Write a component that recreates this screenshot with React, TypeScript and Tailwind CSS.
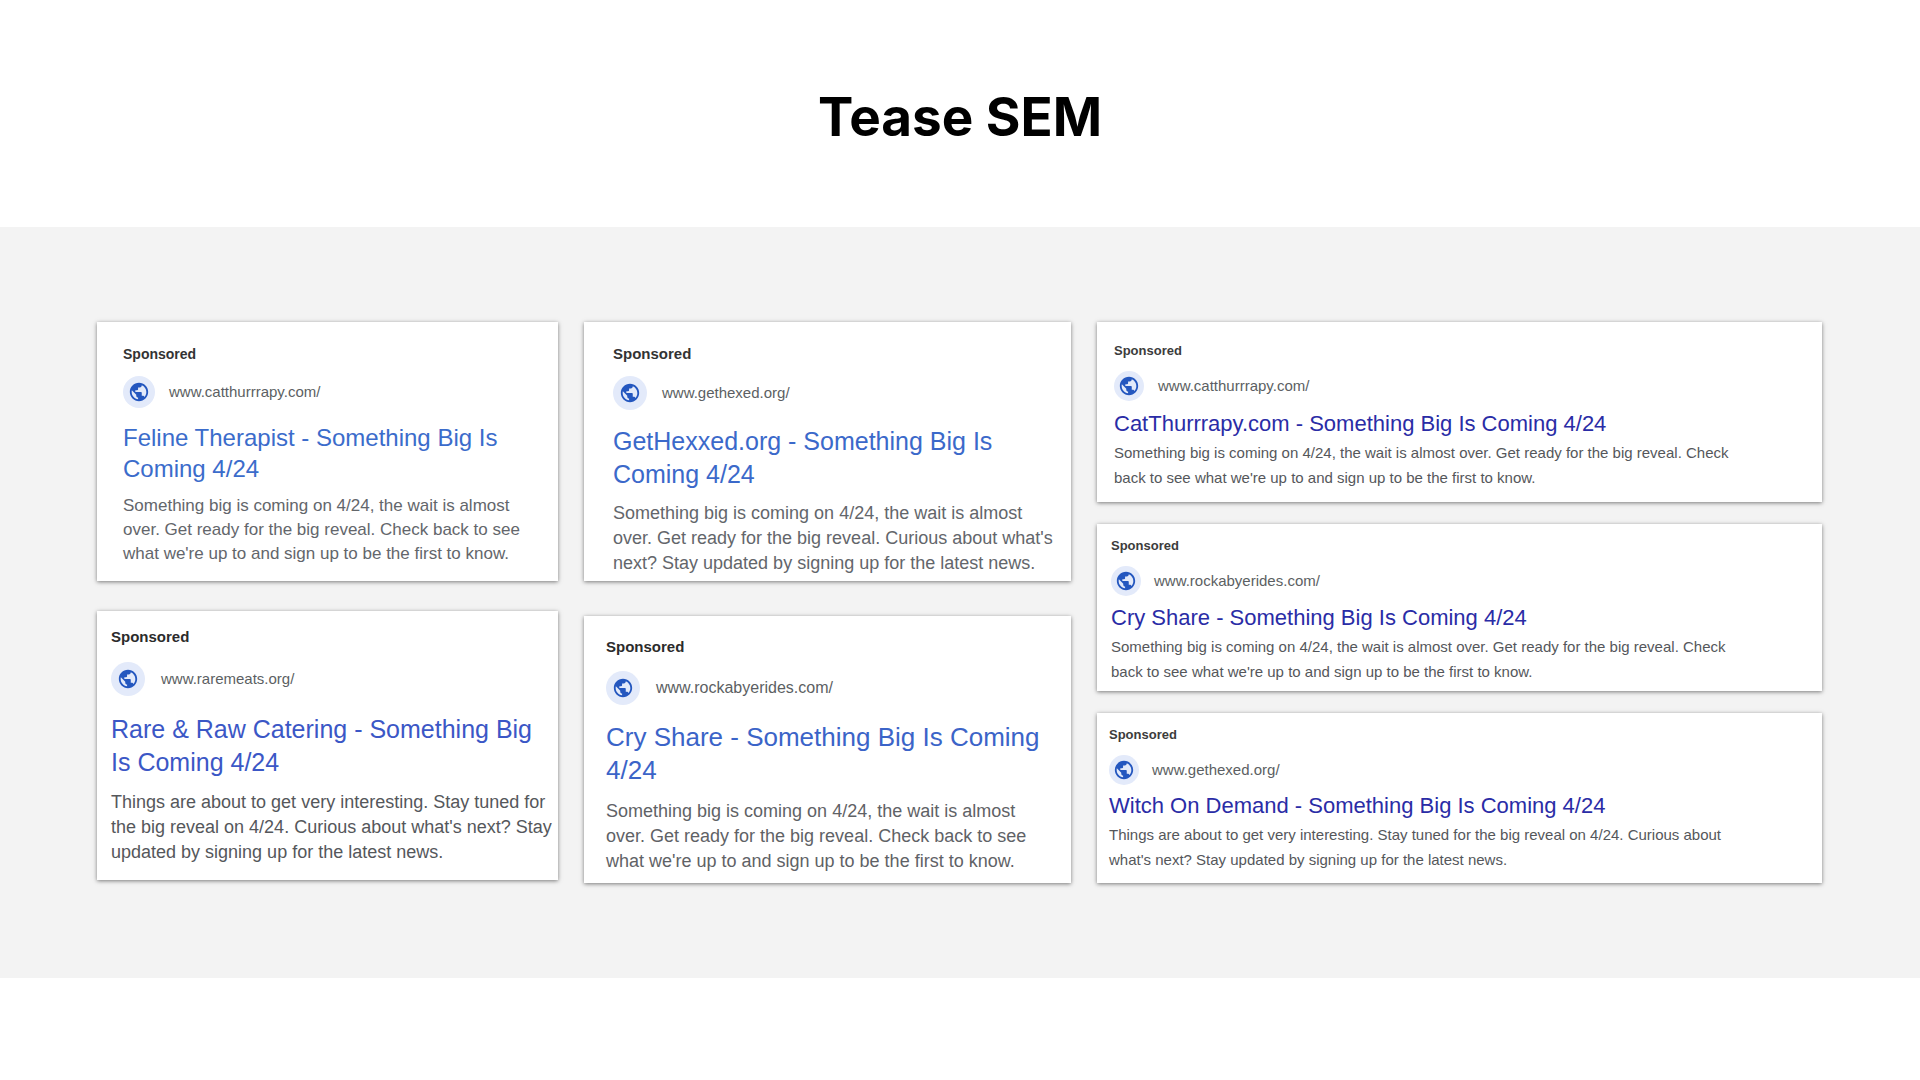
import React from 'react';
import { MdPublic } from 'react-icons/md';

interface Ad {
  url: string;
  title: string;
  description: string;
  card: string;
  label: string;
  site: string;
  badge: string;
  heading: string;
  copy: string;
}

const smallAds: Ad[] = [
  {
    url: 'www.catthurrrapy.com/',
    title: 'Feline Therapist - Something Big Is Coming 4/24',
    description:
      "Something big is coming on 4/24, the wait is almost over. Get ready for the big reveal. Check back to see what we're up to and sign up to be the first to know.",
    card: 'pt-[22px] pr-6 pb-[15px] pl-[26px]',
    label: 'text-[14px] text-[#333333]',
    site: 'mt-3 gap-[14px] text-[15px]',
    badge: 'size-8',
    heading: 'mt-[14px] text-[24px] leading-[31px] text-[#3b6ccb]',
    copy: 'mt-[10px] text-[17px] leading-[24px] text-[#63666b]',
  },
  {
    url: 'www.raremeats.org/',
    title: 'Rare & Raw Catering - Something Big Is Coming 4/24',
    description:
      "Things are about to get very interesting. Stay tuned for the big reveal on 4/24. Curious about what's next? Stay updated by signing up for the latest news.",
    card: 'pt-4 pr-1 pb-[15px] pl-[14px]',
    label: 'text-[15px] text-[#2b2b2b]',
    site: 'mt-[15px] gap-4 text-[15px]',
    badge: 'size-[34px]',
    heading: 'mt-[17px] text-[25px] leading-[33px] text-[#3b57c6]',
    copy: 'mt-[11px] text-[18px] leading-[25px] text-[#55575b]',
  },
];

const mediumAds: Ad[] = [
  {
    url: 'www.gethexed.org/',
    title: 'GetHexxed.org - Something Big Is Coming 4/24',
    description:
      "Something big is coming on 4/24, the wait is almost over. Get ready for the big reveal. Curious about what's next? Stay updated by signing up for the latest news.",
    card: 'pt-[22px] pr-4 pb-[5px] pl-[29px]',
    label: 'text-[15px] text-[#333333]',
    site: 'mt-3 gap-[15px] text-[15px]',
    badge: 'size-[34px]',
    heading: 'mt-[15px] text-[25px] leading-[33px] text-[#3b69ca]',
    copy: 'mt-[10px] text-[18px] leading-[25px] text-[#63666b]',
  },
  {
    url: 'www.rockabyerides.com/',
    title: 'Cry Share - Something Big Is Coming 4/24',
    description:
      "Something big is coming on 4/24, the wait is almost over. Get ready for the big reveal. Check back to see what we're up to and sign up to be the first to know.",
    card: 'pt-[21px] pr-4 pb-[9px] pl-[22px]',
    label: 'text-[15px] text-[#2b2b2b]',
    site: 'mt-[14px] gap-4 text-[16px]',
    badge: 'size-[34px]',
    heading: 'mt-4 text-[26px] leading-[33px] text-[#3b64c8]',
    copy: 'mt-3 text-[18px] leading-[25px] text-[#5f6266]',
  },
];

const wideBase = {
  label: 'text-[13px] text-[#3c3c3c]',
  badge: 'size-[30px]',
  copy: 'mt-[2px] max-w-[640px] text-[15px] leading-[25px] text-[#55575b]',
};

const wideAds: Ad[] = [
  {
    ...wideBase,
    url: 'www.catthurrrapy.com/',
    title: 'CatThurrrapy.com - Something Big Is Coming 4/24',
    description:
      "Something big is coming on 4/24, the wait is almost over. Get ready for the big reveal. Check back to see what we're up to and sign up to be the first to know.",
    card: 'pt-[19px] pr-4 pb-3 pl-[17px]',
    site: 'mt-[10px] gap-[14px] text-[15px]',
    heading: 'mt-[9px] text-[22px] leading-[28px] text-[#2a2ca6]',
  },
  {
    ...wideBase,
    url: 'www.rockabyerides.com/',
    title: 'Cry Share - Something Big Is Coming 4/24',
    description:
      "Something big is coming on 4/24, the wait is almost over. Get ready for the big reveal. Check back to see what we're up to and sign up to be the first to know.",
    card: 'pt-3 pr-4 pb-[7px] pl-[14px]',
    site: 'mt-[10px] gap-[13px] text-[15px]',
    heading: 'mt-2 text-[22px] leading-[28px] text-[#2a2ca6]',
  },
  {
    ...wideBase,
    url: 'www.gethexed.org/',
    title: 'Witch On Demand - Something Big Is Coming 4/24',
    description:
      "Things are about to get very interesting. Stay tuned for the big reveal on 4/24. Curious about what's next? Stay updated by signing up for the latest news.",
    card: 'pt-3 pr-4 pb-[11px] pl-3',
    site: 'mt-[10px] gap-[13px] text-[15px]',
    heading: 'mt-[7px] text-[22px] leading-[28px] text-[#2a2ca6]',
  },
];

const AdCard: React.FC<{ ad: Ad }> = ({ ad }) => {
  return (
    <article className={`bg-white shadow-[0_1px_4px_rgba(0,0,0,0.5)] ${ad.card}`}>
      <p className={`font-bold leading-5 ${ad.label}`}>Sponsored</p>
      <div className={`flex items-center text-[#5c5f63] ${ad.site}`}>
        <span className={`flex shrink-0 items-center justify-center rounded-full bg-[#e3eafa] ${ad.badge}`}>
          <MdPublic className="size-[22px] text-[#2457bf]" />
        </span>
        <span className="leading-5">{ad.url}</span>
      </div>
      <h2 className={ad.heading}>
        <a href="#" className="hover:underline">{ad.title}</a>
      </h2>
      <p className={ad.copy}>{ad.description}</p>
    </article>
  );
};

const App: React.FC = () => {
  return (
    <div className="min-h-screen bg-white font-['Liberation_Sans',Arial,sans-serif]">
      <header className="px-6 pt-[85px] pb-[78px] text-center">
        <h1 className="font-['Inter',sans-serif] text-[53px] leading-[64px] font-bold text-black">Tease SEM</h1>
      </header>

      <main className="grid grid-cols-1 items-start gap-[26px] bg-[#f3f3f3] px-6 py-[95px] xl:grid-cols-[461fr_487fr_725fr] xl:pr-[98px] xl:pl-[97px]">
        <div className="flex flex-col gap-[30px]">
          {smallAds.map((ad) => <AdCard key={ad.title} ad={ad} />)}
        </div>
        <div className="flex flex-col gap-[35px]">
          {mediumAds.map((ad) => <AdCard key={ad.title} ad={ad} />)}
        </div>
        <div className="flex flex-col gap-[22px]">
          {wideAds.map((ad) => <AdCard key={ad.title} ad={ad} />)}
        </div>
      </main>
    </div>
  );
};

export default App;
